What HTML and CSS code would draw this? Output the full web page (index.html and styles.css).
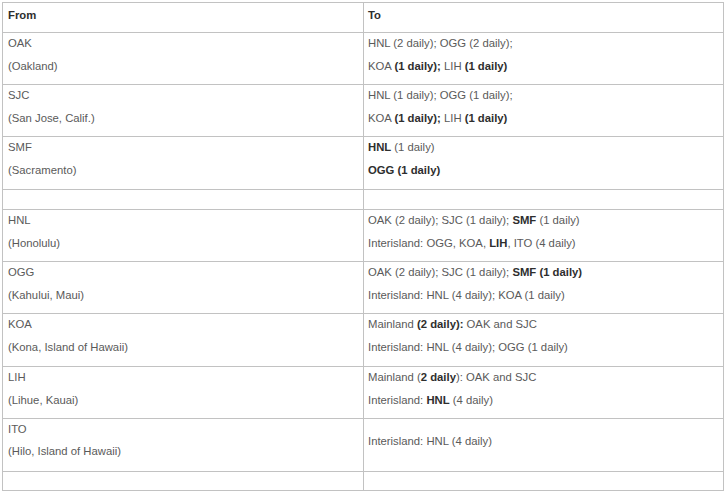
FILE: index.html
```
<!DOCTYPE html>
<html lang="en">
<head>
<meta charset="utf-8">
<title>Routes</title>
<link rel="stylesheet" href="styles.css">
</head>
<body>
<div class="routes" role="table">
  <div class="cell head from" role="columnheader">From</div>
  <div class="cell head to" role="columnheader">To</div>

  <div class="cell from"><div class="ln">OAK</div><div class="ln">(Oakland)</div></div>
  <div class="cell to"><div class="ln">HNL (2 daily); OGG (2 daily);</div><div class="ln">KOA <b>(1 daily);</b> LIH <b>(1 daily)</b></div></div>

  <div class="cell from"><div class="ln">SJC</div><div class="ln">(San Jose, Calif.)</div></div>
  <div class="cell to"><div class="ln">HNL (1 daily); OGG (1 daily);</div><div class="ln">KOA <b>(1 daily);</b> LIH <b>(1 daily)</b></div></div>

  <div class="cell from"><div class="ln">SMF</div><div class="ln">(Sacramento)</div></div>
  <div class="cell to"><div class="ln"><b>HNL</b> (1 daily)</div><div class="ln"><b>OGG (1 daily)</b></div></div>

  <div class="cell from"></div>
  <div class="cell to"></div>

  <div class="cell from"><div class="ln">HNL</div><div class="ln">(Honolulu)</div></div>
  <div class="cell to"><div class="ln">OAK (2 daily); SJC (1 daily); <b>SMF</b> (1 daily)</div><div class="ln">Interisland: OGG, KOA, <b>LIH</b>, ITO (4 daily)</div></div>

  <div class="cell from"><div class="ln">OGG</div><div class="ln">(Kahului, Maui)</div></div>
  <div class="cell to"><div class="ln">OAK (2 daily); SJC (1 daily); <b>SMF (1 daily)</b></div><div class="ln">Interisland: HNL (4 daily); KOA (1 daily)</div></div>

  <div class="cell from"><div class="ln">KOA</div><div class="ln">(Kona, Island of Hawaii)</div></div>
  <div class="cell to"><div class="ln">Mainland <b>(2 daily):</b> OAK and SJC</div><div class="ln">Interisland: HNL (4 daily); OGG (1 daily)</div></div>

  <div class="cell from"><div class="ln">LIH</div><div class="ln">(Lihue, Kauai)</div></div>
  <div class="cell to"><div class="ln">Mainland (<b>2 daily</b>): OAK and SJC</div><div class="ln">Interisland: <b>HNL</b> (4 daily)</div></div>

  <div class="cell from tight"><div class="ln">ITO</div><div class="ln">(Hilo, Island of Hawaii)</div></div>
  <div class="cell to single"><div class="ln">Interisland: HNL (4 daily)</div></div>

  <div class="cell from"></div>
  <div class="cell to"></div>
</div>
</body>
</html>
```

FILE: styles.css
```
html, body {
  margin: 0;
  padding: 0;
  background: #ffffff;
}

body {
  padding: 2px;
  font-family: "Liberation Sans", Arial, sans-serif;
  font-size: 11.3px;
  color: #5a5a5a;
}

.routes {
  display: grid;
  grid-template-columns: 361px 360px;
  grid-template-rows: 30px 52px 52px 53px 20px 52px 52px 53px 52px 53px 19px;
  width: max-content;
  border-left: 1px solid #c2c2c2;
  border-top: 1px solid #c2c2c2;
}

.cell {
  box-sizing: border-box;
  border-right: 1px solid #c2c2c2;
  border-bottom: 1px solid #c2c2c2;
  display: flex;
  flex-direction: column;
  gap: 2px;
}

.cell.from {
  padding-left: 5px;
}

.cell.to {
  padding-left: 4px;
}

.ln {
  line-height: 21px;
  white-space: nowrap;
}

.head {
  padding-top: 2px;
  line-height: 21px;
  font-weight: bold;
  color: #2e2e2e;
}

.tight {
  padding-top: 0;
}

.tight .ln {
  line-height: 20px;
}

.single {
  padding-top: 12px;
}

b {
  font-weight: bold;
  color: #2e2e2e;
}
```
